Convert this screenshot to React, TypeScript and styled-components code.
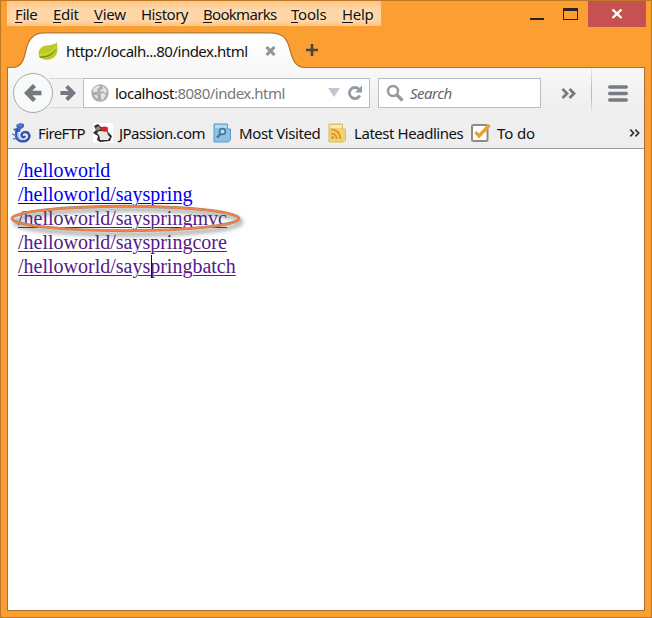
import React from 'react';
import styled, { createGlobalStyle } from 'styled-components';

const Global = createGlobalStyle`
  * { box-sizing: border-box; }
  html, body { margin: 0; padding: 0; overflow: hidden; }
  svg { display: block; flex: none; }
`;

const Frame = styled.div`
  width: 652px;
  height: 618px;
  background: #fc9f32;
  border: 1px solid #bc7826;
  padding: 0 6px 6px;
  display: flex;
  flex-direction: column;
  font: 15px/20px 'Noto Sans', sans-serif;
  color: #111;
`;

const TitleBar = styled.div`
  height: 31px;
  flex: none;
  display: flex;
  align-items: flex-start;
`;

const MenuStrip = styled.div`
  width: 374px;
  height: 25px;
  padding: 3px 0 0 8px;
  display: flex;
  background: linear-gradient(#fdc687, #fed5a6 35%, #fed5a6 75%, #fdc483);
`;

const Text = styled.span<{ $w: number; $ls?: number }>`
  display: block;
  flex: none;
  width: ${(p) => p.$w}px;
  letter-spacing: ${(p) => p.$ls ?? -0.5}px;
  white-space: pre;
`;

const MenuItem = styled(Text)`
  text-shadow: 0 0 4px #fff3e2;
`;

const AccessKey = styled.span`
  text-decoration: underline;
  text-decoration-thickness: 1px;
  text-underline-offset: 2px;
`;

const Controls = styled.div`
  margin-left: auto;
  margin-right: -1px;
  display: flex;
`;

const CloseButton = styled.div`
  width: 58px;
  height: 26px;
  margin-left: 10px;
  background: #c75050;
  display: flex;
  align-items: center;
  justify-content: center;
`;

const TabBar = styled.div`
  height: 35px;
  flex: none;
  display: flex;
  position: relative;
  z-index: 1;
`;

const Tab = styled.div`
  position: relative;
  width: 297px;
  height: 36px;
  padding: 0 0 0 31px;
  display: flex;
  align-items: center;
`;

const TabShape = styled.svg`
  position: absolute;
  left: 0;
  top: 0;
`;

const TabContent = styled.div`
  position: relative;
  height: 36px;
  padding-top: 2px;
  display: flex;
  align-items: center;
`;

const Client = styled.div`
  width: 638px;
  flex: 1;
  border: 1px solid #a9712f;
  background: #fff;
  display: flex;
  flex-direction: column;
`;

const Chrome = styled.div`
  height: 81px;
  flex: none;
  background: linear-gradient(#f8f8f8, #efefef 45%, #eee);
  border-bottom: 1px solid #999;
`;

const NavBar = styled.div`
  height: 50px;
  display: flex;
  align-items: center;
  padding-left: 5px;
`;

const BackButton = styled.div`
  position: relative;
  z-index: 1;
  width: 40px;
  height: 40px;
  border: 1px solid #aaa;
  border-radius: 50%;
  background: #f8f9f9;
  display: flex;
  align-items: center;
  justify-content: center;
`;

const ForwardButton = styled.div`
  width: 34px;
  height: 30px;
  margin-left: -4px;
  padding-left: 11px;
  border: solid #d5d7d8;
  border-width: 1px 0;
  background: #f2f2f3;
  display: flex;
  align-items: center;
`;

const Field = styled.div<{ $w: number }>`
  width: ${(p) => p.$w}px;
  height: 30px;
  border: 1px solid #b4bfc6;
  background: #fff;
  padding-left: 7px;
  display: flex;
  align-items: center;
`;

const Muted = styled.span`
  color: #777;
`;

const Hint = styled(Text)`
  color: #666;
  font-style: italic;
`;

const Divider = styled.div`
  width: 1px;
  height: 46px;
  align-self: flex-start;
  background: linear-gradient(#e8e8ea, #b8bcc2 45%, #b8bcc2 65%, #eee);
`;

const BookmarkBar = styled.div`
  height: 30px;
  display: flex;
  align-items: center;
  padding-left: 4px;
`;

const BookmarkIcon = styled.svg`
  margin-right: 6px;
`;

const Page = styled.div`
  padding: 9px 0 0 10px;
  display: flex;
  flex-direction: column;
  align-items: flex-start;
  font: 20px/24px 'Liberation Serif', serif;
`;

const PageLink = styled.a<{ $visited?: boolean }>`
  position: relative;
  height: 24px;
  color: ${(p) => (p.$visited ? '#551a8b' : '#0000ee')};
  text-decoration: underline;
  text-decoration-thickness: 1px;
  text-underline-offset: 2px;
`;

const Ring = styled.svg`
  position: absolute;
  left: -10px;
  top: -7px;
`;

const Caret = styled.i`
  position: absolute;
  left: 133px;
  top: 1px;
  width: 1px;
  height: 23px;
  background: #150060;
`;

const menus = [
  { pre: '', key: 'F', post: 'ile', w: 38, ls: -0.4 },
  { pre: '', key: 'E', post: 'dit', w: 41, ls: -0.3 },
  { pre: '', key: 'V', post: 'iew', w: 47, ls: -0.3 },
  { pre: 'Hi', key: 's', post: 'tory', w: 62, ls: -0.5 },
  { pre: '', key: 'B', post: 'ookmarks', w: 88, ls: -0.7 },
  { pre: '', key: 'T', post: 'ools', w: 51, ls: -0.2 },
  { pre: '', key: 'H', post: 'elp', w: 38, ls: -0.3 },
];

const TabOutline = () => (
  <TabShape width="306" height="38" viewBox="0 0 306 38">
    <defs>
      <linearGradient id="tabFill" x1="0" y1="0" x2="0" y2="1">
        <stop offset="0" stopColor="#fff" />
        <stop offset="1" stopColor="#f8f8f8" />
      </linearGradient>
    </defs>
    <path d="M1 35.5H5C15 35.5 17 27 19 18C21 8 26 .8 37 .8H262C276 .8 280 6 283 18C286 29 289 35.5 298 35.5V37H1Z" fill="url(#tabFill)" />
    <path d="M0 35.5H5C15 35.5 17 27 19 18C21 8 26 .8 37 .8H262C276 .8 280 6 283 18C286 29 289 35.5 298 35.5" fill="none" stroke="#b8762a" strokeWidth="1.2" />
  </TabShape>
);

const Leaf = () => (
  <svg width="20" height="20" viewBox="0 0 20 20">
    <path d="M19 1C16 5 9 3 4 6C-1 10 0 15 3 17C9 21 17 18 19 12C20 8 19 4 19 1Z" fill="#bdcb25" />
    <path d="M1 15C8 16 15 13 18 7C17 14 9 17 2 17Z" fill="#759b16" />
    <path d="M2 14C8 14 14 12 18 6" fill="none" stroke="#dce56b" strokeWidth=".8" />
  </svg>
);

const Arrow = ({ size, back }: { size: number; back?: boolean }) => (
  <svg width={size} height={size} viewBox="0 0 18 18" fill="none" stroke="#757a80" strokeWidth="4.4">
    {back ? <path d="M10.5 1.5L3 9L10.5 16.5M3.5 9H17.5" /> : <path d="M7.5 1.5L15 9L7.5 16.5M14.5 9H.5" />}
  </svg>
);

const Globe = () => (
  <svg width="18" height="18" viewBox="0 0 18 18">
    <circle cx="9" cy="9" r="8.7" fill="#adadad" />
    <path d="M2 5C4 2 7 1 9 2L8 4L6 5L7 7L5 8L2 8ZM11 2C14 3 16 6 16 8L14 9L12 7L10 8L9 6L12 5ZM9 10L13 9L15 11L12 16L10 15L10 12ZM3 11L6 11L7 14L5 14Z" fill="#e4e4e4" />
  </svg>
);

const Chevrons = ({ w, h, color, sw }: { w: number; h: number; color: string; sw: number }) => (
  <svg width={w} height={h} viewBox="0 0 16 11" fill="none" stroke={color} strokeWidth={sw}>
    <path d="M1.5 1L6 5.5L1.5 10M8.5 1L13 5.5L8.5 10" />
  </svg>
);

const App = () => (
  <>
    <Global />
    <Frame>
      <TitleBar>
        <MenuStrip>
          {menus.map((m) => (
            <MenuItem key={m.post} $w={m.w} $ls={m.ls}>
              {m.pre}<AccessKey>{m.key}</AccessKey>{m.post}
            </MenuItem>
          ))}
        </MenuStrip>
        <Controls>
          <svg width="48" height="26" viewBox="0 0 48 26" fill="#2b2522">
            <path d="M0 17H14V19H0ZM33 7H48V19H33ZM34 10V18H47V10Z" fillRule="evenodd" />
          </svg>
          <CloseButton>
            <svg width="12" height="10" viewBox="0 0 12 10">
              <path d="M1.5 .5L10.5 9M10.5 .5L1.5 9" stroke="#fff" strokeWidth="2.4" />
            </svg>
          </CloseButton>
        </Controls>
      </TitleBar>

      <TabBar>
        <Tab>
          <TabOutline />
          <TabContent>
            <Leaf />
            <svg width="8" height="1" />
            <Text $w={199}>http://localh...80/index.html</Text>
            <svg width="11" height="10" viewBox="0 0 11 10">
              <path d="M1.5 1L9.5 9M9.5 1L1.5 9" stroke="#8c959c" strokeWidth="3" />
            </svg>
          </TabContent>
        </Tab>
        <svg width="30" height="36" viewBox="0 0 30 36">
          <path d="M2 18H14M8 12V24" stroke="#494640" strokeWidth="2.6" />
        </svg>
      </TabBar>

      <Client>
        <Chrome>
          <NavBar>
            <BackButton><Arrow size={18} back /></BackButton>
            <ForwardButton><Arrow size={16} /></ForwardButton>
            <Field $w={287}>
              <Globe />
              <svg width="6" height="1" />
              <Text $w={213}>localhost<Muted>:8080/index.html</Muted></Text>
              <svg width="12" height="10" viewBox="0 0 12 10"><path d="M0 0H12L6 9Z" fill="#c2c8d2" /></svg>
              <svg width="22" height="16" viewBox="0 0 22 16">
                <path d="M19.8 10.5A5.5 5.5 0 1 1 19 4.3" fill="none" stroke="#8f9aa5" strokeWidth="2.8" />
                <path d="M22 .5V7.5H15Z" fill="#8f9aa5" />
              </svg>
            </Field>
            <svg width="8" height="1" />
            <Field $w={163}>
              <svg width="18" height="18" viewBox="0 0 18 18" fill="none" stroke="#999">
                <circle cx="7" cy="7" r="5" strokeWidth="2.5" />
                <path d="M11 11L16.5 16.5" strokeWidth="3.2" />
              </svg>
              <svg width="6" height="1" />
              <Hint $w={60}>Search</Hint>
            </Field>
            <svg width="20" height="1" />
            <Chevrons w={16} h={11} color="#777b82" sw={2.8} />
            <svg width="14" height="1" />
            <Divider />
            <svg width="16" height="1" />
            <svg width="20" height="17" viewBox="0 0 20 17">
              <path d="M1.8 2H18.2M1.8 8.5H18.2M1.8 15H18.2" stroke="#777b82" strokeWidth="3.6" strokeLinecap="round" />
            </svg>
          </NavBar>

          <BookmarkBar>
            <BookmarkIcon width="20" height="20" viewBox="0 0 20 20" fill="none">
              <path d="M4 2L8 0L12 1L12 4L9 6L8 9L4 9L1 6L5 5Z" fill="#4267c4" />
              <path d="M6 6C3 10 3 17 9 18.2C15 19 18.5 15 17 11.5C15.500 8 10 8.500 9.500 12C9.300 14.500 12.500 15 13 12.800" stroke="#3153b3" strokeWidth="2.5" />
              <path d="M6 2L10 2.500M0 11L4 12.500M1 16L4.500 15.500" stroke="#5b86dc" strokeWidth="1.600" />
              <path d="M6 10C5.500 14 7.500 16.500 10 17" stroke="#8eb7f1" strokeWidth="1.300" />
            </BookmarkIcon>
            <Text $w={55} $ls={-0.6}>FireFTP</Text>
            <BookmarkIcon width="20" height="20" viewBox="0 0 20 20">
              <path fill="#fff" d="M0 0H20V20H0Z" />
              <path d="M1 3L5 1L8 4L14 4L15 9L19 13L17 18L7 19L4 17L5 13L0 10L3 7Z" fill="#332e2c" />
              <path d="M6 8L14 8.500L15 12L17 14L15 17L7 17L6.500 13L4 10Z" fill="#e9e8e4" />
              <ellipse cx="11.5" cy="6" rx="3.5" ry="2.4" fill="#d82524" />
              <path d="M2 5L6 3L8 6L4 8Z" fill="#8d8a88" />
            </BookmarkIcon>
            <Text $w={94} $ls={-0.55}>JPassion.com</Text>
            <BookmarkIcon width="20" height="20" viewBox="0 0 20 20">
              <path d="M1 1H14.500V6H17.500V17L15 19H1Z" fill="#8dc0e3" stroke="#5a9ac5" />
              <path d="M2 2H14V5H2Z" fill="#b5dbf1" />
              <circle cx="9.500" cy="8.500" r="2.900" fill="#b9ddf3" stroke="#40799f" strokeWidth="1.800" />
              <path d="M7.500 11L4 14.500" stroke="#40799f" strokeWidth="2.400" />
            </BookmarkIcon>
            <Text $w={89} $ls={-0.4}>Most Visited</Text>
            <BookmarkIcon width="20" height="20" viewBox="0 0 20 20">
              <path d="M1 1H14.500V6H17.500V17L15 19H1Z" fill="#edd477" stroke="#d8be5c" />
              <path d="M2 2H14V5H2Z" fill="#f9ebb0" />
              <path d="M3 6.5C9 6.5 12 10 12.5 16M3 10.5C6 10.5 8.5 12.5 8.8 16" fill="none" stroke="#e8942d" strokeWidth="2.1" />
              <circle cx="4.5" cy="14.5" r="1.6" fill="#e8942d" />
            </BookmarkIcon>
            <Text $w={117} $ls={-0.45}>Latest Headlines</Text>
            <BookmarkIcon width="20" height="20" viewBox="0 0 20 20">
              <rect x="1" y="2" width="15.5" height="16" rx="1.5" fill="#fff" stroke="#8c8e82" strokeWidth="2" />
              <path d="M4.5 9L8 13L18.5 2" fill="none" stroke="#e9a132" strokeWidth="3.4" />
            </BookmarkIcon>
            <Text $w={132} $ls={-0.1}>To do</Text>
            <Chevrons w={12} h={8} color="#333" sw={2.4} />
          </BookmarkBar>
        </Chrome>

        <Page>
          <PageLink>/helloworld</PageLink>
          <PageLink>/helloworld/sayspring</PageLink>
          <PageLink $visited>
            /helloworld/sayspringmvc
            <Ring width="244" height="44" viewBox="0 0 244 44">
              <defs>
                <filter id="soft" x="-10%" y="-40%" width="120%" height="190%"><feGaussianBlur stdDeviation="2" /></filter>
              </defs>
              <ellipse cx="120" cy="23" rx="113" ry="12.5" fill="none" stroke="#555" strokeOpacity=".6" strokeWidth="3.5" filter="url(#soft)" />
              <ellipse cx="117.5" cy="19.5" rx="113.5" ry="12.2" fill="none" stroke="#a98668" strokeWidth="3" />
              <ellipse cx="117.5" cy="19.5" rx="113.5" ry="12.2" fill="none" stroke="#f58243" strokeWidth="1.8" />
            </Ring>
          </PageLink>
          <PageLink $visited>/helloworld/sayspringcore</PageLink>
          <PageLink $visited>/helloworld/sayspringbatch<Caret /></PageLink>
        </Page>
      </Client>
    </Frame>
  </>
);

export default App;
